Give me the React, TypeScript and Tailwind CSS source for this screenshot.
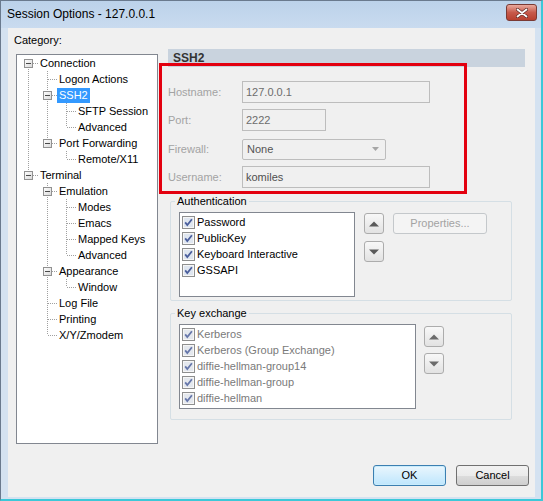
type Node = { label: string; selected?: boolean; children?: Node[] };

type Row = {
  label: string;
  depth: number;
  guides: boolean[];
  first: boolean;
  last: boolean;
  parent: boolean;
  selected: boolean;
};

const tree: Node[] = [
  {
    label: "Connection",
    children: [
      { label: "Logon Actions" },
      { label: "SSH2", selected: true, children: [{ label: "SFTP Session" }, { label: "Advanced" }] },
      { label: "Port Forwarding", children: [{ label: "Remote/X11" }] },
    ],
  },
  {
    label: "Terminal",
    children: [
      {
        label: "Emulation",
        children: [{ label: "Modes" }, { label: "Emacs" }, { label: "Mapped Keys" }, { label: "Advanced" }],
      },
      { label: "Appearance", children: [{ label: "Window" }] },
      { label: "Log File" },
      { label: "Printing" },
      { label: "X/Y/Zmodem" },
    ],
  },
];

function flatten(nodes: Node[], depth = 0, guides: boolean[] = [], out: Row[] = []) {
  nodes.forEach((n, i) => {
    const last = i === nodes.length - 1;
    out.push({
      label: n.label,
      depth,
      guides,
      first: depth === 0 && i === 0,
      last,
      parent: !!n.children,
      selected: !!n.selected,
    });
    if (n.children) flatten(n.children, depth + 1, [...guides, !last], out);
  });
  return out;
}

const rows = flatten(tree);
const COL = 19;

function TreeLines({ row }: { row: Row }) {
  const w = COL * (row.depth + 1);
  const cx = row.depth * COL + 9.5;
  const dot = { stroke: "#a0a0a0", strokeWidth: 1, strokeDasharray: "1 1" };
  return (
    <svg width={w} height={16} className="shrink-0" shapeRendering="crispEdges">
      {row.guides.map((g, i) =>
        g ? <line key={i} x1={i * COL + 9.5} x2={i * COL + 9.5} y1={0} y2={16} {...dot} /> : null,
      )}
      {!row.first && <line x1={cx} x2={cx} y1={0} y2={8} {...dot} />}
      {!row.last && <line x1={cx} x2={cx} y1={8} y2={16} {...dot} />}
      <line x1={cx + 0.5} x2={w} y1={8.5} y2={8.5} {...dot} />
      {row.parent && (
        <g>
          <defs>
            <linearGradient id="bx" x1="0" y1="0" x2="1" y2="1">
              <stop offset="0" stopColor="#ffffff" />
              <stop offset="1" stopColor="#d8d8d8" />
            </linearGradient>
          </defs>
          <rect x={cx - 4} y={4.5} width={8} height={8} fill="url(#bx)" stroke="#919191" />
          <line x1={cx - 2.5} x2={cx + 2.5} y1={8.5} y2={8.5} stroke="#4a4a4a" />
        </g>
      )}
    </svg>
  );
}

function Check({ dim }: { dim?: boolean }) {
  return (
    <svg width="13" height="13" className="shrink-0">
      <rect x="0.5" y="0.5" width="12" height="12" fill="#f6f6f6" stroke="#8e8f8f" />
      <rect x="2" y="2" width="9" height="9" fill={dim ? "#e4e8ee" : "#dfe6f0"} />
      <path
        d="M3.2 6.4l2.1 2.6L9.9 3.3"
        fill="none"
        stroke={dim ? "#6677aa" : "#4a5e9c"}
        strokeWidth="1.8"
      />
    </svg>
  );
}

function ArrowButton({ down, dim }: { down?: boolean; dim?: boolean }) {
  return (
    <div className="flex h-[21px] w-[20px] items-center justify-center rounded-[3px] border border-[#acacac] bg-[linear-gradient(to_bottom,#f8f8f8,#e2e2e2)]">
      <svg width="10" height="6">
        <path d={down ? "M0 0.5h10L5 5.5z" : "M0 5.5h10L5 0.5z"} fill={dim ? "#6b6b6b" : "#5a5a5a"} />
      </svg>
    </div>
  );
}

function Field({ label, children, mt }: { label: string; children: React.ReactNode; mt: string }) {
  return (
    <div className={`flex h-[22px] items-center ${mt}`}>
      <span className="w-[74px] text-[#a3a3a3]">{label}</span>
      {children}
    </div>
  );
}

const auth = ["Password", "PublicKey", "Keyboard Interactive", "GSSAPI"];
const kex = [
  "Kerberos",
  "Kerberos (Group Exchange)",
  "diffie-hellman-group14",
  "diffie-hellman-group",
  "diffie-hellman",
];

export default function App() {
  return (
    <div className="relative h-[501px] w-[543px] overflow-hidden border-t border-l border-r-2 border-b-2 border-t-[#6a7a8e] border-l-[#6a7a8e] border-r-[#3cc8d8] border-b-[#3cc8d8] bg-[#d4e2f1] font-['Liberation_Sans',Arial,sans-serif] text-[11px] leading-[13px] text-black">
      <div className="flex h-[27px] items-center justify-between bg-[linear-gradient(to_bottom,#bcd2ea,#c9dbef)] pl-[6px] pr-[4px]">
        <span className="text-[12px]">Session Options - 127.0.0.1</span>
        <div className="mt-[-4px] flex h-[17px] w-[31px] items-center justify-center rounded-[3px] border border-[#7a3a34] bg-[linear-gradient(to_bottom,#e9a99d,#c75a4b_50%,#b8402f)]">
          <svg width="12" height="10">
            <path d="M1.5 1.5l9 7M10.5 1.5l-9 7" stroke="#5a2a26" strokeWidth="3.2" strokeLinecap="round" />
            <path d="M1.5 1.5l9 7M10.5 1.5l-9 7" stroke="#ffffff" strokeWidth="1.8" strokeLinecap="round" />
          </svg>
        </div>
      </div>

      <div className="ml-[7px] h-[469px] w-[527px] bg-[#f0f0f0]">
        <div className="flex items-start">
          <div className="w-[150px]">
            <div className="ml-[6px] mt-[6px]">Category:</div>
            <div className="ml-[8px] mt-[7px] h-[390px] w-[142px] border border-[#828790] bg-white pl-[2px]">
              {rows.map((r, i) => (
                <div key={i} className="flex h-[16px] items-center">
                  <TreeLines row={r} />
                  <span
                    className={`h-[15px] whitespace-nowrap px-[2px] leading-[15px] ${
                      r.selected ? "bg-[#3399ff] text-white" : ""
                    }`}
                  >
                    {r.label}
                  </span>
                </div>
              ))}
            </div>
          </div>

          <div className="ml-[10px] mt-[21px] w-[357px]">
            <div className="h-[18px] bg-[#c9d3de] pl-[5px] text-[12px] font-bold leading-[18px] text-[#333]">
              SSH2
            </div>

            <Field label="Hostname:" mt="mt-[14px]">
              <div className="flex h-[22px] w-[188px] items-center border border-[#bdbdbd] bg-[#f0f0f0] pl-[3px] text-[#6d6d6d]">
                127.0.0.1
              </div>
            </Field>
            <Field label="Port:" mt="mt-[6px]">
              <div className="flex h-[22px] w-[84px] items-center border border-[#bdbdbd] bg-[#f0f0f0] pl-[3px] text-[#6d6d6d]">
                2222
              </div>
            </Field>
            <Field label="Firewall:" mt="mt-[7px]">
              <div className="flex h-[21px] w-[144px] items-center justify-between rounded-[2px] border border-[#bdbdbd] bg-[#f0f0f0] pl-[4px] pr-[6px] text-[#555]">
                None
                <svg width="7" height="4">
                  <path d="M0 0h7L3.5 4z" fill="#a6a6a6" />
                </svg>
              </div>
            </Field>
            <Field label="Username:" mt="mt-[6px]">
              <div className="flex h-[22px] w-[188px] items-center border border-[#bdbdbd] bg-[#f0f0f0] pl-[3px] text-[#4f4f4f]">
                komiles
              </div>
            </Field>

            <div className="ml-[2px] mt-[13px] h-[100px] w-[342px] rounded-[2px] border border-[#d5dfe5]">
              <div className="ml-[4px] mt-[-7px] w-fit bg-[#f0f0f0] px-[2px]">Authentication</div>
              <div className="ml-[8px] mt-[4px] flex items-start">
                <div className="h-[85px] w-[176px] border border-[#828790] bg-white pt-[1px]">
                  {auth.map((a) => (
                    <div key={a} className="flex h-[16px] items-center pl-[2px]">
                      <Check />
                      <span className="ml-[2px]">{a}</span>
                    </div>
                  ))}
                </div>
                <div className="ml-[9px] mt-[1px] flex flex-col gap-[7px]">
                  <ArrowButton />
                  <ArrowButton down />
                </div>
                <div className="ml-[9px] mt-[1px] flex h-[21px] w-[94px] items-center justify-center rounded-[3px] border border-[#c4c8cb] bg-[#f4f4f4] text-[#a3a3a3]">
                  Properties...
                </div>
              </div>
            </div>

            <div className="ml-[2px] mt-[12px] h-[107px] w-[342px] rounded-[2px] border border-[#d5dfe5]">
              <div className="ml-[4px] mt-[-7px] w-fit bg-[#f0f0f0] px-[2px]">Key exchange</div>
              <div className="ml-[8px] mt-[4px] flex items-start">
                <div className="h-[85px] w-[237px] border border-[#828790] bg-white pt-[1px]">
                  {kex.map((k) => (
                    <div key={k} className="flex h-[16px] items-center pl-[2px] text-[#7a7a7a]">
                      <Check dim />
                      <span className="ml-[2px]">{k}</span>
                    </div>
                  ))}
                </div>
                <div className="ml-[8px] mt-[2px] flex flex-col gap-[6px]">
                  <ArrowButton dim />
                  <ArrowButton down dim />
                </div>
              </div>
            </div>
          </div>
        </div>

        <div className="mt-[21px] flex justify-end gap-[10px] pr-[6px]">
          <div className="flex h-[21px] w-[73px] items-center justify-center rounded-[3px] border border-[#3c7fb1] bg-[linear-gradient(to_bottom,#eaf6fd,#bee6fd)] shadow-[inset_0_0_0_1px_#c9ecfc]">
            OK
          </div>
          <div className="flex h-[21px] w-[73px] items-center justify-center rounded-[3px] border border-[#707070] bg-[linear-gradient(to_bottom,#f2f2f2,#ebebeb_50%,#dddddd_51%,#cfcfcf)]">
            Cancel
          </div>
        </div>
      </div>

      <div className="pointer-events-none absolute left-[158px] top-[62px] h-[131px] w-[308px] border-[3px] border-[#e3000f]" />
    </div>
  );
}
